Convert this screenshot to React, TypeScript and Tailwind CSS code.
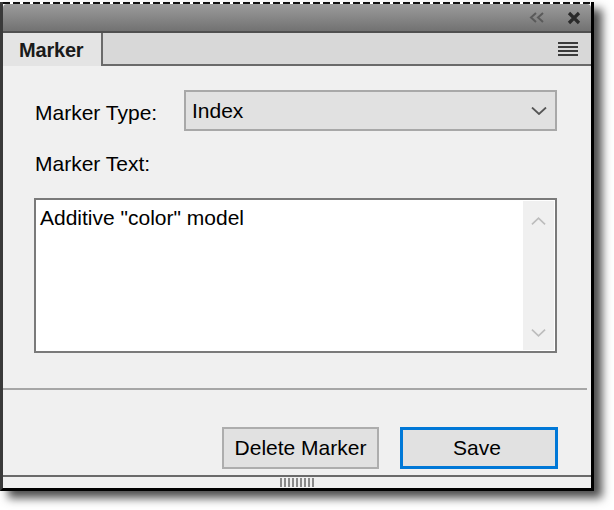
import React from "react";

const font = { fontFamily: '"Liberation Sans", Arial, sans-serif' };

function Chevron({ className, up }: { className?: string; up?: boolean }) {
  return (
    <svg className={className} viewBox="0 0 16 8" fill="none">
      <path
        d={up ? "M1 7.5 L8 1 L15 7.5" : "M1 0.5 L8 7 L15 0.5"}
        stroke="currentColor"
        strokeWidth="1.8"
      />
    </svg>
  );
}

export default function App() {
  return (
    <div
      className="w-[614px] h-[510px] bg-white pt-[2px] text-black"
      style={font}
    >
      <div className="w-[594px] flex flex-col border-l-[3px] border-r-[3px] border-b-[3px] border-l-[#3a3a3a] border-r-black border-b-black shadow-[8px_7px_9px_rgba(0,0,0,0.7)]">
        {/* dashed top */}
        <div className="h-[2px] bg-[repeating-linear-gradient(90deg,#111_0_7px,#fff_7px_10px)]" />
        {/* title bar */}
        <div className="h-[27px] rounded-t-[4px] bg-gradient-to-b from-[#9c9c9c] to-[#727272] flex items-center justify-end pr-[10px]">
          <svg className="w-[16px] h-[11px] mr-[22px] text-[#5a5a5a]" viewBox="0 0 16 11" fill="none">
            <path d="M7 1 L2 5.5 L7 10 M14 1 L9 5.5 L14 10" stroke="currentColor" strokeWidth="2" />
          </svg>
          <svg className="w-[14px] h-[14px] text-[#2a2a2a]" viewBox="0 0 14 14" fill="none">
            <path d="M2 2 L12 12 M12 2 L2 12" stroke="currentColor" strokeWidth="3.2" />
          </svg>
        </div>
        <div className="h-[2px] bg-[#505050]" />
        {/* tab row */}
        <div className="h-[33px] flex bg-[#d8d8d8]">
          <div className="w-[100px] bg-[#e4e4e4] border-r-2 border-[#6a6a6a] flex items-center pl-[16px] text-[20px] tracking-[-0.2px] font-bold text-[#1a1a1a]">
            Marker
          </div>
          <div className="flex-1 border-b-2 border-[#6a6a6a] flex items-center justify-end pr-[13px]">
            <div className="w-[20px] flex flex-col gap-[2px]">
              <div className="h-[2px] bg-[#3a3a3a]" />
              <div className="h-[2px] bg-[#3a3a3a]" />
              <div className="h-[2px] bg-[#3a3a3a]" />
              <div className="h-[2px] bg-[#3a3a3a]" />
            </div>
          </div>
        </div>
        {/* content */}
        <div className="h-[409px] bg-[#f0f0f0] flex flex-col text-[21px] leading-[24px]">
          <div className="flex items-center mt-[24px] pl-[32px]">
            <div className="w-[149px] pt-[5px]">Marker Type:</div>
            <div className="w-[373px] h-[41px] bg-[#e1e1e1] border-2 border-[#a8a8a8] flex items-center justify-between pl-[6px] pr-[8px]">
              <span className="pt-[1px]">Index</span>
              <Chevron className="w-[16px] h-[8px] text-[#555]" />
            </div>
          </div>
          <div className="pl-[32px] mt-[21px]">Marker Text:</div>
          <div className="ml-[31px] mt-[22px] w-[523px] h-[155px] bg-white border-2 border-[#7a7a7a] flex">
            <div className="flex-1 pl-[4px] pt-[6px]">Additive "color" model</div>
            <div className="w-[31px] my-[1px] mr-[1px] bg-[#f0f0f0] flex flex-col items-center justify-between pt-[16px] pb-[13px] text-[#bdbdbd]">
              <Chevron up className="w-[15px] h-[8px]" />
              <Chevron className="w-[15px] h-[8px]" />
            </div>
          </div>
          <div className="mt-[35px] h-[2px] w-[584px] bg-[#a6a6a6]" />
          <div className="mt-[37px] flex justify-end pr-[33px] gap-[21px]">
            <div className="w-[157px] h-[42px] bg-[#e1e1e1] border-2 border-[#adadad] flex items-center justify-center">
              Delete Marker
            </div>
            <div className="w-[158px] h-[42px] bg-[#e1e1e1] border-[3px] border-[#0078d7] flex items-center justify-center pr-[4px]">
              Save
            </div>
          </div>
        </div>
        <div className="h-[2px] bg-[#6a6a6a]" />
        <div className="h-[11px] bg-[#f0f0f0] flex justify-center items-center">
          <div className="flex gap-[2px] h-[9px]">
            {Array.from({ length: 9 }).map((_, i) => (
              <div key={i} className="w-[2px] h-full bg-[#8a8a8a]" />
            ))}
          </div>
        </div>
      </div>
    </div>
  );
}
